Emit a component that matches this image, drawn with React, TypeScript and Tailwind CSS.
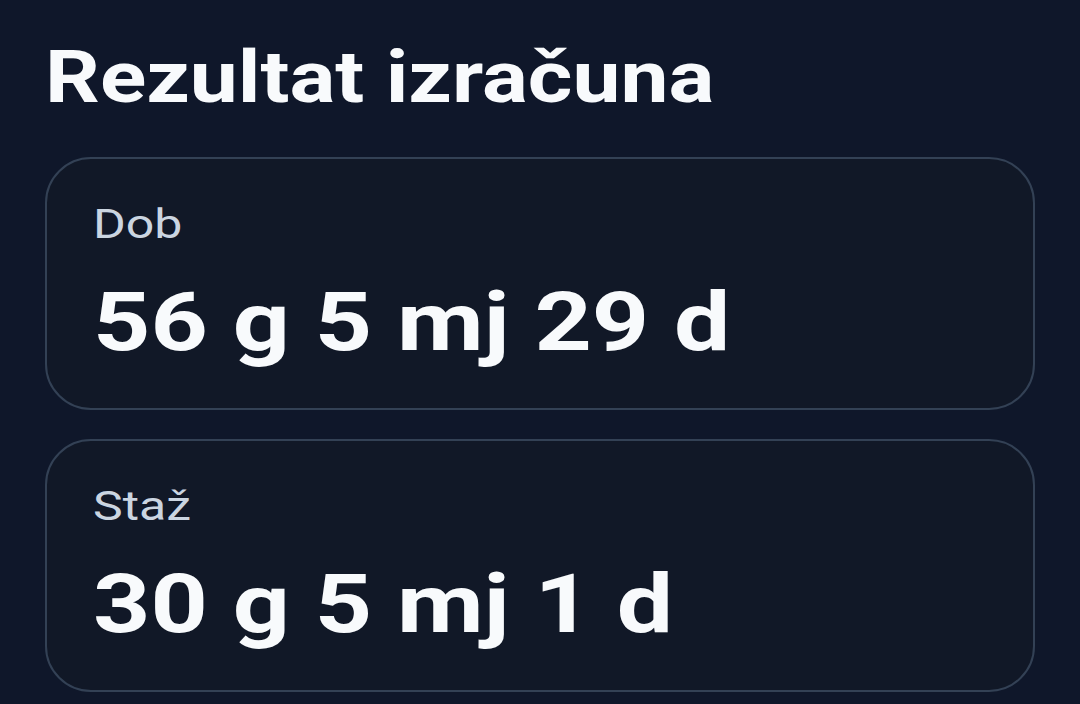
import React from 'react';

interface ResultItem {
  label: string;
  value: string;
}

const results: ResultItem[] = [
  { label: 'Dob', value: '56 g 5 mj 29 d' },
  { label: 'Staž', value: '30 g 5 mj 1 d' },
];

function ResultCard({ label, value }: ResultItem) {
  return (
    <div className="flex flex-col items-start rounded-[46px] border-2 border-[#334155] bg-[#111827] px-[46px] pt-[46px] pb-[45px]">
      <p className="origin-left scale-x-[1.25] text-[40px] leading-[40px] text-[#cbd5e1]">
        {label}
      </p>
      <p className="mt-[37px] origin-left scale-x-[1.235] text-[81px] font-bold leading-[81px] text-[#f8fafc]">
        {value}
      </p>
    </div>
  );
}

export default function App() {
  return (
    <div
      className="min-h-screen overflow-hidden bg-[#0f172a] px-[45px] pt-[41px]"
      style={{ fontFamily: 'Roboto, "Noto Sans", sans-serif' }}
    >
      <h1 className="w-fit origin-left scale-x-[1.174] text-[73px] font-bold leading-[73px] text-[#f8fafc]">
        Rezultat izračuna
      </h1>
      <div className="mt-[43px] flex flex-col gap-[29px]">
        {results.map((item) => (
          <ResultCard key={item.label} label={item.label} value={item.value} />
        ))}
      </div>
    </div>
  );
}
